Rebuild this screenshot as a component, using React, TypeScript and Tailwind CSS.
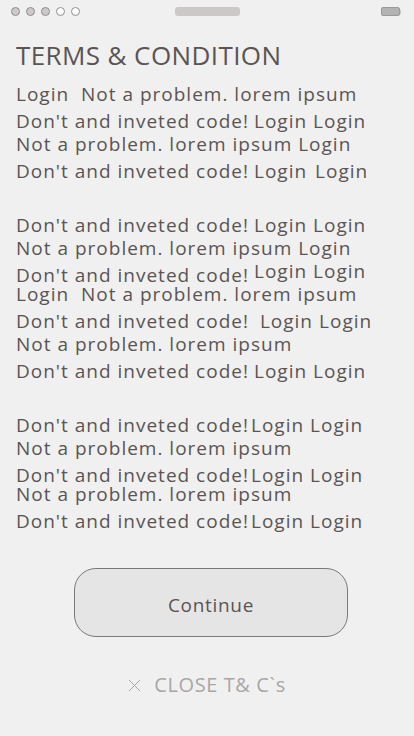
const font = { fontFamily: '"Open Sans", "Noto Sans", sans-serif' }

type Line = { text: string; tail?: boolean; ml?: string; gap?: string; lift?: boolean; mt: string }

// each line is 20px tall; mt is the gap from the previous line
const lines: Line[] = [
  { text: 'Login  Not a problem. lorem ipsum', mt: 'mt-0' },
  { text: "Don't and inveted code!", tail: true, mt: 'mt-[7px]' },
  { text: 'Not a problem. lorem ipsum Login', mt: 'mt-[3px]' },
  { text: "Don't and inveted code!", tail: true, gap: 'ml-[8px]', mt: 'mt-[7px]' },
  { text: "Don't and inveted code!", tail: true, mt: 'mt-[34px]' },
  { text: 'Not a problem. lorem ipsum Login', mt: 'mt-[3px]' },
  { text: "Don't and inveted code!", tail: true, lift: true, mt: 'mt-[7px]' },
  { text: 'Login  Not a problem. lorem ipsum', mt: 'mt-[-1px]' },
  { text: "Don't and inveted code! ", tail: true, mt: 'mt-[7px]' },
  { text: 'Not a problem. lorem ipsum', mt: 'mt-[3px]' },
  { text: "Don't and inveted code!", tail: true, mt: 'mt-[7px]' },
  { text: "Don't and inveted code!", tail: true, ml: 'ml-[2px]', mt: 'mt-[34px]' },
  { text: 'Not a problem. lorem ipsum', mt: 'mt-[3px]' },
  { text: "Don't and inveted code!", tail: true, ml: 'ml-[2px]', mt: 'mt-[7px]' },
  { text: 'Not a problem. lorem ipsum', mt: 'mt-[-1px]' },
  { text: "Don't and inveted code!", tail: true, ml: 'ml-[2px]', mt: 'mt-[7px]' },
]

function StatusBar() {
  return (
    <div className="flex items-center justify-between h-[23px] px-[11px]">
      <div className="flex items-center gap-[6px] w-[80px]">
        {[0, 1, 2, 3, 4].map((i) => (
          <span
            key={i}
            className={`block w-[9px] h-[9px] rounded-full border border-[#8f8f8f] ${i < 3 ? 'bg-[#cdc9c8]' : 'bg-white'}`}
          />
        ))}
      </div>
      <div className="w-[65px] h-[9px] rounded-[3px] bg-[#ccc8c7]" />
      <div className="flex items-center w-[80px] justify-end pr-[2px]">
        <div className="w-[19px] h-[9px] rounded-[2px] border border-[#9a9a9a] bg-[#b3b3b3]" />
        <div className="w-[1px] h-[4px] bg-[#c8c8c8]" />
      </div>
    </div>
  )
}

export default function App() {
  return (
    <div className="w-[414px] h-[736px] bg-[#f0f0f0] overflow-hidden" style={font}>
      <StatusBar />
      <div className="px-[16px]">
        <h1 className="mt-[18px] text-[26px] leading-[28px] tracking-[0.4px] text-[#5b5453] font-normal">
          TERMS &amp; CONDITION
        </h1>
        <div className="mt-[15px] text-[19px] tracking-[1px] text-[#5b5453]">
          {lines.map((l, i) => (
            <div key={i} className={`h-[20px] leading-[20px] whitespace-pre flex ${l.mt}`}>
              <span>{l.text}</span>
              {l.tail && (
                <span className={`flex ${l.ml ?? 'ml-[5px]'} ${l.lift ? 'relative top-[-4px]' : ''}`}>
                  <span>Login</span>
                  <span className={l.gap ?? 'ml-[6px]'}>Login</span>
                </span>
              )}
            </div>
          ))}
        </div>
      </div>

      <div className="flex justify-center mt-[37px] pl-[8px]">
        <button className="w-[274px] h-[69px] pt-[5px] rounded-[22px] border border-[#7b7878] bg-[#e5e5e5] text-[19px] tracking-[0.7px] text-[#5b5453]">
          Continue
        </button>
      </div>

      <div className="flex items-center justify-center gap-[13px] mt-[33px] text-[#aaa6a5]">
        <svg width="13" height="13" viewBox="0 0 13 13" fill="none" stroke="#aaa6a5" strokeWidth="1">
          <path d="M1 1 L12 12 M12 1 L1 12" />
        </svg>
        <span className="text-[20px] tracking-[0.6px]">CLOSE T&amp; C`s</span>
      </div>
    </div>
  )
}
